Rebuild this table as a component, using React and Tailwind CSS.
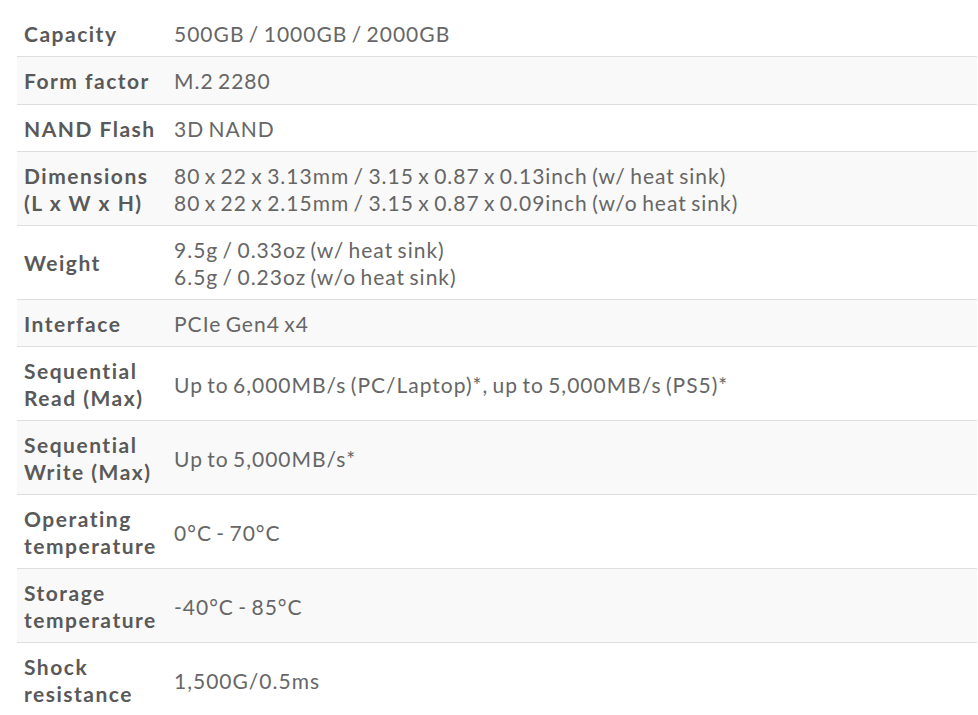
import React from 'react';

const specs = [
    { label: ['Capacity'], value: ['500GB / 1000GB / 2000GB'] },
    { label: ['Form factor'], value: ['M.2 2280'] },
    { label: ['NAND Flash'], value: ['3D NAND'] },
    {
        label: ['Dimensions', '(L x W x H)'],
        value: [
            '80 x 22 x 3.13mm / 3.15 x 0.87 x 0.13inch (w/ heat sink)',
            '80 x 22 x 2.15mm / 3.15 x 0.87 x 0.09inch (w/o heat sink)',
        ],
    },
    { label: ['Weight'], value: ['9.5g / 0.33oz (w/ heat sink)', '6.5g / 0.23oz (w/o heat sink)'] },
    { label: ['Interface'], value: ['PCIe Gen4 x4'] },
    {
        label: ['Sequential', 'Read (Max)'],
        value: ['Up to 6,000MB/s (PC/Laptop)*, up to 5,000MB/s (PS5)*'],
    },
    { label: ['Sequential', 'Write (Max)'], value: ['Up to 5,000MB/s*'] },
    { label: ['Operating', 'temperature'], value: ['0°C - 70°C'] },
    { label: ['Storage', 'temperature'], value: ['-40°C - 85°C'] },
    { label: ['Shock', 'resistance'], value: ['1,500G/0.5ms'] },
];

const SpecRow = ({ spec, shaded }) => (
    <div className={`flex min-h-[47.33px] items-center border-b border-[#dedede] pt-[10px] pb-[9px] ${shaded ? 'bg-[#f9f9f9]' : 'bg-white'}`}>
        <div className="w-[157px] shrink-0 pl-[7px] font-bold tracking-[1.5px] text-[#595959]">
            {spec.label.map((line) => (
                <div key={line} className="whitespace-nowrap">{line}</div>
            ))}
        </div>
        <div className="tracking-[1px] [word-spacing:-2px] text-[#666666]">
            {spec.value.map((line) => (
                <div key={line} className="whitespace-nowrap">{line}</div>
            ))}
        </div>
    </div>
);

export default function App() {
    return (
        <div className="min-h-screen bg-white pl-[17px] pt-[10px] font-['Lato',sans-serif] text-[21px] leading-[27px]">
            <div className="w-[960px]">
                {specs.map((spec, i) => (
                    <SpecRow key={spec.label.join(' ')} spec={spec} shaded={i % 2 === 1} />
                ))}
            </div>
        </div>
    );
}
